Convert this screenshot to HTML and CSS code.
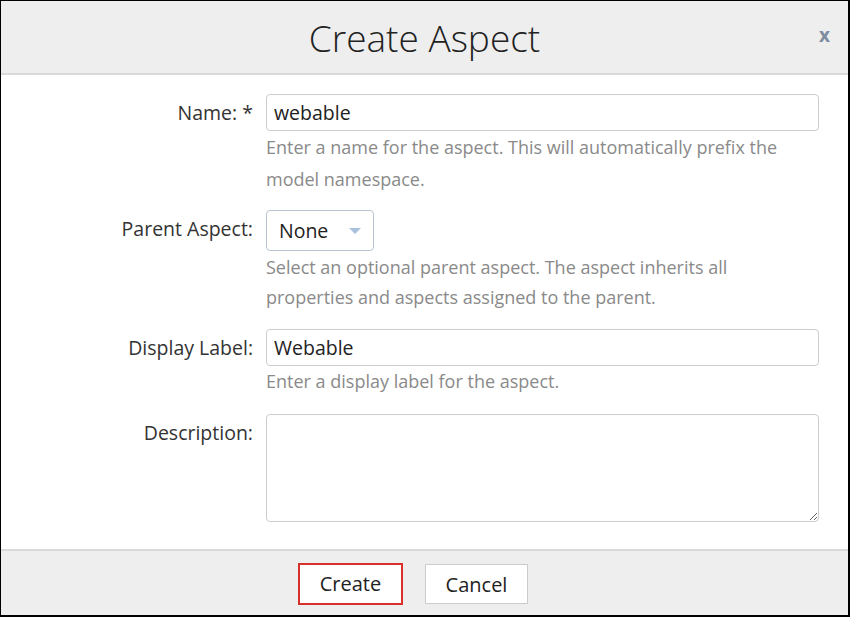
FILE: index.html
```html
<!DOCTYPE html>
<html>
<head>
<meta charset="utf-8">
<link rel="stylesheet" href="styles.css">
</head>
<body>
<div class="dialog">
  <div class="header">
    <h1 class="title">Create Aspect</h1>
    <span class="close">x</span>
  </div>
  <div class="form">
    <div class="row">
      <label class="label">Name: *</label>
      <div class="field">
        <div class="input">webable</div>
        <div class="help help-first">Enter a name for the aspect. This will automatically prefix the model namespace.</div>
      </div>
    </div>
    <div class="row row-parent">
      <label class="label label-select">Parent Aspect:</label>
      <div class="field">
        <div class="select"><span>None</span><span class="arrow"></span></div>
        <div class="help help-select">Select an optional parent aspect. The aspect inherits all properties and aspects assigned to the parent.</div>
      </div>
    </div>
    <div class="row row-display">
      <label class="label">Display Label:</label>
      <div class="field">
        <div class="input">Webable</div>
        <div class="help">Enter a display label for the aspect.</div>
      </div>
    </div>
    <div class="row row-desc">
      <label class="label">Description:</label>
      <div class="field">
        <textarea class="textarea"></textarea>
      </div>
    </div>
  </div>
  <div class="footer">
    <button class="btn btn-primary">Create</button>
    <button class="btn">Cancel</button>
  </div>
</div>
</body>
</html>
```

FILE: styles.css
```css
html, body {
  margin: 0;
  padding: 0;
  background: #fff;
}
body {
  font-family: "Open Sans", "Liberation Sans", sans-serif;
  color: #333;
}
.dialog {
  width: 850px;
  height: 617px;
  box-sizing: border-box;
  border-style: solid;
  border-color: #000;
  border-width: 1px 2px 2px 1px;
  display: flex;
  flex-direction: column;
  background: #fff;
}
.header {
  height: 72px;
  background: #eeeeee;
  border-bottom: 2px solid #d9d9d9;
  display: flex;
  align-items: center;
  justify-content: center;
  position: relative;
}
.title {
  margin: 0;
  font-weight: 300;
  font-size: 37px;
  color: #222;
  line-height: 1;
  padding-top: 1px;
}
.close {
  position: absolute;
  right: 18px;
  top: 21px;
  font-size: 19px;
  font-weight: 700;
  color: #7d8c9e;
}
.form {
  flex: 1;
  padding-top: 19px;
  display: flex;
  flex-direction: column;
  gap: 16px;
}
.row {
  display: grid;
  grid-template-columns: 252px 553px;
  column-gap: 13px;
}
.row-parent {
  margin-top: -1px;
}
.row-display {
  margin-top: 1px;
}
.row-desc {
  margin-top: 1px;
}
.label {
  text-align: right;
  font-size: 19.5px;
  line-height: 37px;
  color: #333;
}
.label-select {
  line-height: 38px;
}
.field {
  display: flex;
  flex-direction: column;
  align-items: flex-start;
}
.input {
  box-sizing: border-box;
  width: 553px;
  height: 37px;
  border: 1px solid #cccccc;
  border-radius: 4px;
  padding: 0 7px;
  font-size: 19.5px;
  line-height: 35px;
  color: #222;
}
.select {
  box-sizing: border-box;
  width: 108px;
  height: 41px;
  border: 1px solid #b8c4d2;
  border-radius: 4px;
  padding: 0 12px;
  font-size: 19.5px;
  line-height: 39px;
  color: #222;
  display: flex;
  justify-content: space-between;
  align-items: center;
}
.arrow {
  width: 0;
  height: 0;
  border-left: 6px solid transparent;
  border-right: 6px solid transparent;
  border-top: 6px solid #a9c1dd;
}
.help {
  font-size: 18px;
  line-height: 31px;
  color: #8a8a8a;
  width: 553px;
}
.help-first {
  line-height: 32px;
}
.help-select {
  margin-top: 1px;
  line-height: 30px;
}
.textarea {
  box-sizing: border-box;
  width: 553px;
  height: 108px;
  border: 1px solid #cccccc;
  border-radius: 4px;
  margin: 0;
  display: block;
  font-family: inherit;
}
.footer {
  height: 64px;
  background: #eeeeee;
  border-top: 2px solid #d9d9d9;
  display: flex;
  align-items: center;
  padding-left: 297px;
  gap: 22px;
}
.btn {
  box-sizing: border-box;
  height: 40px;
  width: 103px;
  background: #fff;
  border: 1px solid #cccccc;
  font-family: "Open Sans", "Liberation Sans", sans-serif;
  font-size: 20px;
  color: #222;
  padding: 0;
  margin-top: 2px;
}
.btn-primary {
  width: 105px;
  height: 42px;
  border: 2px solid #d8302a;
  margin-top: 1px;
}
```
